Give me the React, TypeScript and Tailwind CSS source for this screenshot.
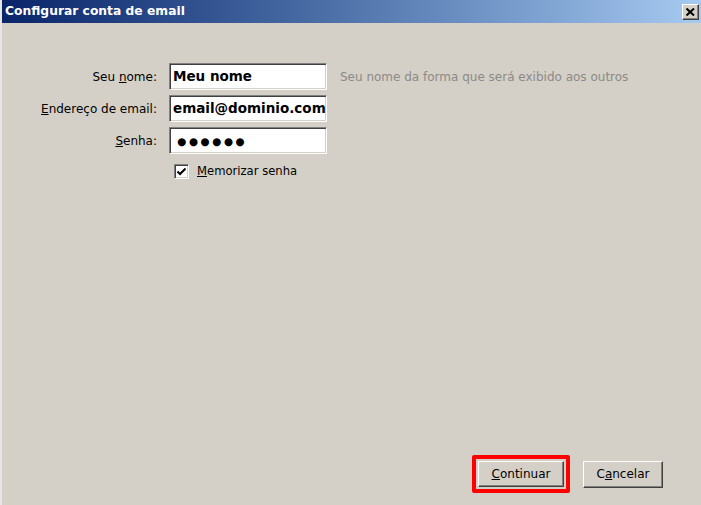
import React from 'react';

const ui = '"DejaVu Sans", Verdana, sans-serif';

function Field({ label, access, rest, value, pad = 3 }: { label?: string; access: string; rest: string; value: React.ReactNode; pad?: number }) {
  return (
    <>
      <label className="text-[12px] text-black text-right self-center" style={{ fontFamily: ui }}>
        {label}
        <u>{access}</u>
        {rest}
      </label>
      <div
        className={`h-[27px] bg-white border border-t-[#808080] border-l-[#808080] border-b-white border-r-white shadow-[inset_1px_1px_#404040,inset_-1px_-1px_#d4d0c8] flex items-center ${pad === 3 ? 'pl-[3px]' : 'pl-[7px]'}`}
      >
        <span className="text-[13.5px] text-black font-bold" style={{ fontFamily: ui }}>
          {value}
        </span>
      </div>
    </>
  );
}

export default function App() {
  return (
    <div className="w-[701px] h-[505px] bg-[#d4d0c8] flex flex-col border-l-2 border-l-[#e8e6e0] overflow-hidden" style={{ fontFamily: ui }}>
      {/* Title bar */}
      <div className="h-[23px] shrink-0 bg-gradient-to-r from-[#0a246a] to-[#a6caf0] flex items-center justify-between pl-[3px] pr-[2px]">
        <span className="text-white font-bold text-[12.3px]">Configurar conta de email</span>
        <button className="w-[17px] h-[16px] bg-[#d4d0c8] border border-t-white border-l-white border-r-[#404040] border-b-[#404040] shadow-[inset_-1px_-1px_#808080] flex items-center justify-center">
          <svg width="9" height="8" viewBox="0 0 9 8">
            <path d="M0.5 0.5 L8 7.5 M8 0.5 L0.5 7.5" stroke="#000" strokeWidth="2" />
          </svg>
        </button>
      </div>

      {/* Form */}
      <div className="pt-[40px] grid grid-cols-[155px_158px_auto] gap-x-[12px] gap-y-[5px]">
        <Field label="Seu " access="n" rest="ome:" value="Meu nome" />
        <span className="self-center text-[12px] text-[#8c8a86] pl-[1px] whitespace-nowrap">Seu nome da forma que será exibido aos outros</span>
        <Field access="E" rest="ndereço de email:" value="email@dominio.com" />
        <span />
        <Field access="S" rest="enha:" pad={7} value={<span className="text-[10.5px] tracking-[2.5px]">●●●●●●</span>} />
        <span />
        <span />
        <label className="flex items-center gap-[8px] mt-[4px] pl-[5px]">
          <span className="w-[15px] h-[15px] bg-white border border-t-[#808080] border-l-[#808080] border-b-white border-r-white shadow-[inset_1px_1px_#404040,inset_-1px_-1px_#d4d0c8] flex items-center justify-center">
            <svg width="9" height="8" viewBox="0 0 9 8">
              <path d="M0.5 3.5 L3 6 L8.5 0.5" stroke="#000" strokeWidth="2" fill="none" />
            </svg>
          </span>
          <span className="text-[11.6px] text-black">
            <u>M</u>emorizar senha
          </span>
        </label>
        <span />
      </div>

      <div className="flex-1" />

      {/* Buttons */}
      <div className="flex justify-end items-center gap-[13px] pr-[38px] pb-[12px]">
        <div className="border-4 border-[#ff0000] rounded-[2px] p-[2px]">
          <button className="w-[86px] h-[26px] bg-[#d4d0c8] border border-t-white border-l-white border-r-[#404040] border-b-[#404040] shadow-[inset_-1px_-1px_#808080] text-[12px] text-black">
            <u>C</u>ontinuar
          </button>
        </div>
        <button className="w-[80px] h-[27px] bg-[#d4d0c8] border border-t-white border-l-white border-r-[#404040] border-b-[#404040] shadow-[inset_-1px_-1px_#808080] text-[12px] text-black">
          C<u>a</u>ncelar
        </button>
      </div>
    </div>
  );
}
